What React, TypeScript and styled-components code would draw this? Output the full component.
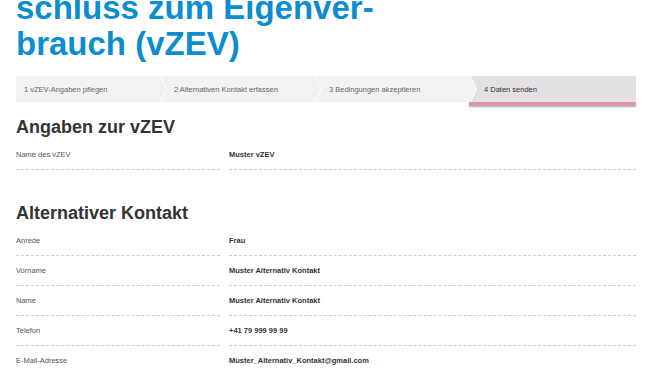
import React from "react"
import styled, { createGlobalStyle } from "styled-components"

const GlobalStyle = createGlobalStyle`
  html, body {
    margin: 0;
    padding: 0;
    background: #fff;
    overflow: hidden;
  }
  body {
    font-family: "Liberation Sans", Arial, sans-serif;
  }
`

const steps = [
  { label: "1 vZEV-Angaben pflegen", width: 150 },
  { label: "2 Alternativen Kontakt erfassen", width: 160 },
  { label: "3 Bedingungen akzeptieren", width: 160 },
  { label: "4 Daten senden" },
]
const activeStep = 3

const vzev = [{ label: "Name des vZEV", value: "Muster vZEV" }]

const contact = [
  { label: "Anrede", value: "Frau" },
  { label: "Vorname", value: "Muster Alternativ Kontakt" },
  { label: "Name", value: "Muster Alternativ Kontakt" },
  { label: "Telefon", value: "+41 79 999 99 99" },
  { label: "E-Mail-Adresse", value: "Muster_Alternativ_Kontakt@gmail.com" },
]

export default function App() {
  return (
    <Page>
      <GlobalStyle />
      <Title>
        schluss zum Eigenver-
        <br />
        brauch (vZEV)
      </Title>

      <Steps>
        {steps.map((s, i) => (
          <StepItem key={s.label} $width={s.width} $first={i === 0}>
            <StepShape
              $active={i === activeStep}
              $first={i === 0}
              $last={i === steps.length - 1}
            >
              {s.label}
            </StepShape>
            {i === activeStep && <ActiveBar />}
          </StepItem>
        ))}
      </Steps>

      <Section>
        <SectionTitle>Angaben zur vZEV</SectionTitle>
        <Fields>
          {vzev.map((f) => (
            <React.Fragment key={f.label}>
              <Label>{f.label}</Label>
              <Value>{f.value}</Value>
            </React.Fragment>
          ))}
        </Fields>
      </Section>

      <Section $gap={32}>
        <SectionTitle>Alternativer Kontakt</SectionTitle>
        <Fields>
          {contact.map((f) => (
            <React.Fragment key={f.label}>
              <Label>{f.label}</Label>
              <Value>{f.value}</Value>
            </React.Fragment>
          ))}
        </Fields>
      </Section>
    </Page>
  )
}

const Page = styled.div`
  width: 620px;
  padding: 0 16px;
`

const Title = styled.h1`
  margin: -10px 0 0;
  font-size: 33px;
  line-height: 36px;
  font-weight: 700;
  color: #0b8dcf;
`

const Steps = styled.ol`
  display: flex;
  margin: 14px 0 0;
  padding: 0;
  list-style: none;
`

const StepItem = styled.li<{ $width?: number; $first: boolean }>`
  display: flex;
  flex-direction: column;
  flex: ${(p) => (p.$width ? `0 0 ${p.$width}px` : "1 1 auto")};
  margin-left: ${(p) => (p.$first ? "0" : "-5px")};
`

const StepShape = styled.div<{ $active: boolean; $first: boolean; $last: boolean }>`
  height: 26px;
  display: flex;
  align-items: center;
  padding-left: ${(p) => (p.$first ? "8px" : "13px")};
  font-size: 7.5px;
  color: ${(p) => (p.$active ? "#333" : "#666")};
  background: ${(p) => (p.$active ? "#e3e1e3" : "#f2f2f2")};
  clip-path: ${(p) => {
    const left = p.$first ? "0 100%, 0 0" : "0 100%, 6px 50%, 0 0"
    const right = p.$last
      ? "100% 0, 100% 100%"
      : "calc(100% - 6px) 0, 100% 50%, calc(100% - 6px) 100%"
    return `polygon(${left}, ${right})`
  }};
`

const ActiveBar = styled.div`
  height: 3px;
  margin-left: -2px;
  background: #e88cb1;
  box-shadow: 0 2px 2px rgba(0, 0, 0, 0.35);
`

const Section = styled.section<{ $gap?: number }>`
  margin-top: ${(p) => p.$gap ?? 11}px;
`

const SectionTitle = styled.h2`
  margin: 0 0 2px;
  font-size: 18px;
  line-height: 22px;
  font-weight: 700;
  color: #333;
`

const Fields = styled.div`
  display: grid;
  grid-template-columns: 204px 1fr;
  column-gap: 9px;
`

const Cell = styled.div`
  height: 29px;
  display: flex;
  align-items: center;
  font-size: 7.5px;
  border-bottom: 1px dashed #cfcfcf;
`

const Label = styled(Cell)`
  color: #555;
`

const Value = styled(Cell)`
  color: #333;
  font-weight: 700;
`
